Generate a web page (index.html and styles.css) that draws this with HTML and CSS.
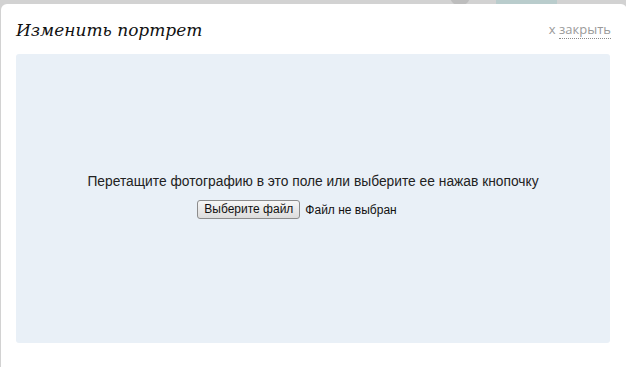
FILE: index.html
```html
<!DOCTYPE html>
<html lang="ru">
<head>
<meta charset="utf-8">
<link rel="stylesheet" href="styles.css">
</head>
<body>
<div class="backdrop">
  <div class="bg-circle"></div>
  <div class="bg-bar"></div>
  <div class="modal">
    <div class="modal-head">
      <h1 class="modal-title">Изменить портрет</h1>
      <a class="close-link" href="#">х <span class="close-text">закрыть</span></a>
    </div>
    <div class="dropzone">
      <p class="drop-hint">Перетащите фотографию в это поле или выберите ее нажав кнопочку</p>
      <div class="file-row">
        <button class="file-btn" type="button">Выберите файл</button>
        <span class="file-status">Файл не выбран</span>
      </div>
    </div>
  </div>
</div>
</body>
</html>
```
FILE: styles.css
```css
html, body {
  margin: 0;
  padding: 0;
  width: 626px;
  height: 367px;
  overflow: hidden;
}
.backdrop {
  position: relative;
  width: 626px;
  height: 367px;
  background: #d2d2d2;
  padding: 4px 0 0 1px;
  box-sizing: border-box;
}
.bg-circle {
  position: absolute;
  left: 450px;
  top: -14px;
  width: 20px;
  height: 20px;
  border-radius: 50%;
  background: #bdbdbd;
}
.bg-bar {
  position: absolute;
  left: 496px;
  top: 0;
  width: 61px;
  height: 4px;
  background: #b9cccc;
}
.modal {
  position: relative;
  width: 626px;
  height: 380px;
  background: #fff;
  border-radius: 6px 6px 0 0;
  padding: 12px 15px 0 15px;
  box-sizing: border-box;
}
.modal-head {
  display: flex;
  justify-content: space-between;
  align-items: flex-start;
  height: 38px;
}
.modal-title {
  margin: 0;
  padding-top: 4px;
  font-family: "DejaVu Serif", Georgia, serif;
  font-style: italic;
  font-weight: normal;
  font-size: 17px;
  line-height: normal;
  color: #111;
}
.close-link {
  padding-top: 4px;
  font-family: "Open Sans", sans-serif;
  font-size: 13px;
  line-height: normal;
  color: #9a9a9a;
  text-decoration: none;
  margin-right: 1px;
}
.close-text {
  border-bottom: 1px dotted #8a8a8a;
}
.dropzone {
  width: 594px;
  height: 289px;
  background: #e9f0f7;
  border-radius: 3px;
  display: flex;
  flex-direction: column;
  align-items: center;
  justify-content: center;
  font-family: "Liberation Sans", Arial, sans-serif;
}
.drop-hint {
  margin: 0 0 11px 0;
  font-size: 13.8px;
  color: #222;
}
.file-row {
  display: flex;
  align-items: center;
  gap: 5px;
  margin-left: -32px;
  margin-bottom: 4px;
}
.file-btn {
  font-family: "Liberation Sans", Arial, sans-serif;
  font-size: 12px;
  color: #111;
  background: linear-gradient(#f6f6f6, #dddddd);
  border: 1px solid #8c8c8c;
  border-radius: 3px;
  padding: 1px 6px;
  height: 19px;
  line-height: 15px;
}
.file-status {
  font-size: 12px;
  color: #111;
}
```
